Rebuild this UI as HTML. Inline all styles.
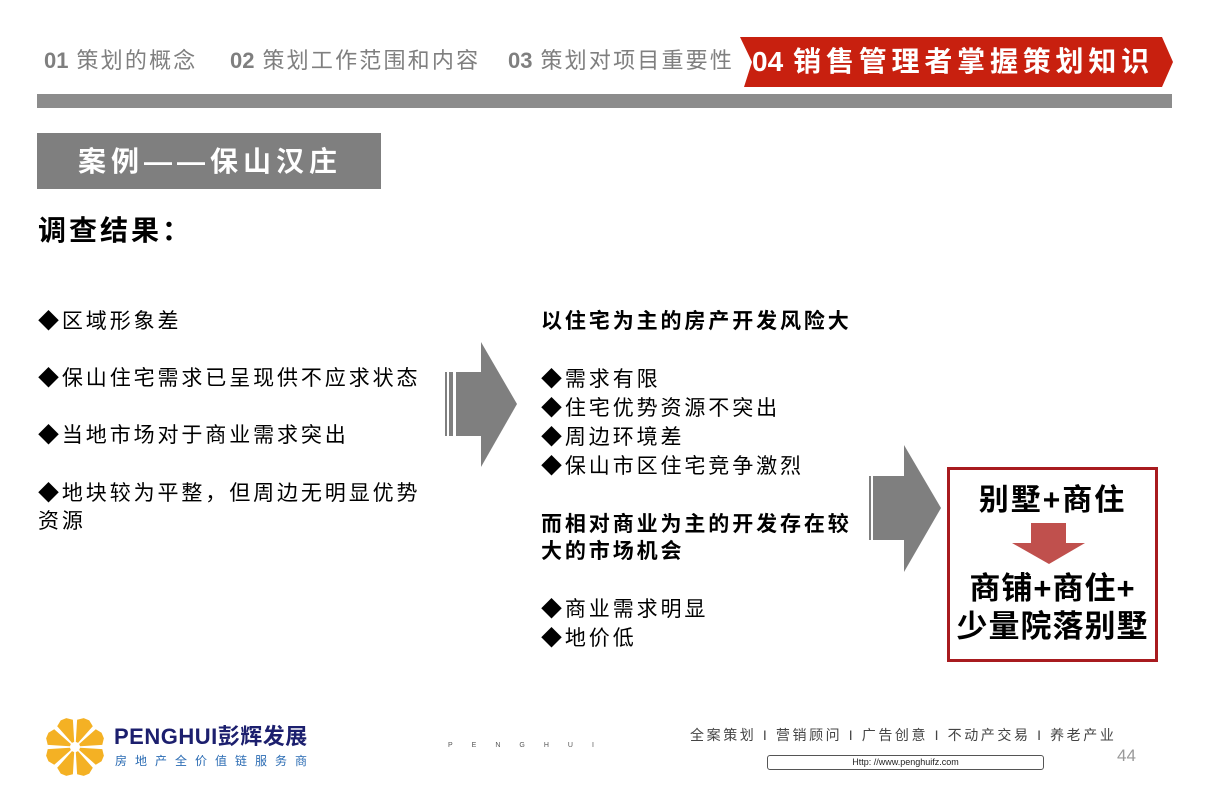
<!DOCTYPE html>
<html><head><meta charset="utf-8"><style>
*{margin:0;padding:0;box-sizing:border-box}
body{width:1209px;height:793px;background:#fff;position:relative;overflow:hidden;font-family:"Liberation Sans","Noto Sans CJK SC",sans-serif;color:#000}
.a{position:absolute;white-space:nowrap}
.nav{font-size:22px;color:#7f7f7f;top:46px;line-height:30px;letter-spacing:2.2px}
.nav b{font-family:"Liberation Sans Narrow","Liberation Sans",sans-serif;font-weight:bold;margin-right:8px;letter-spacing:0}
.t{font-size:21px;line-height:28px;letter-spacing:2.9px}
.bd{font-weight:bold}
</style></head><body>
<div class="a nav" style="left:44px"><b>01</b>策划的概念</div>
<div class="a nav" style="left:230px"><b>02</b>策划工作范围和内容</div>
<div class="a nav" style="left:508px"><b>03</b>策划对项目重要性</div>
<svg class="a" style="left:738px;top:37px" width="436" height="51"><polygon points="2,0 424,0 435,25 424,50 6,50 14,25" fill="#c8200f"/></svg>
<div class="a" style="left:752px;top:43px;font-size:28px;font-weight:bold;color:#fff;line-height:38px;letter-spacing:4.8px"><span style="margin-right:10px;letter-spacing:0">04</span>销售管理者掌握策划知识</div>
<div class="a" style="left:37px;top:94px;width:1135px;height:14px;background:#8c8c8c"></div>
<div class="a" style="left:37px;top:133px;width:344px;height:56px;background:#7f7f7f"></div>
<div class="a" style="left:78px;top:144px;font-size:28px;font-weight:bold;color:#fff;line-height:36px;letter-spacing:5px">案例——保山汉庄</div>
<div class="a bd" style="left:38px;top:213px;font-size:28px;line-height:36px;letter-spacing:3px">调查结果：</div>
<div class="a t" style="left:38px;top:308px">◆区域形象差</div>
<div class="a t" style="left:38px;top:365px">◆保山住宅需求已呈现供不应求状态</div>
<div class="a t" style="left:38px;top:422px">◆当地市场对于商业需求突出</div>
<div class="a t" style="left:38px;top:480px">◆地块较为平整，但周边无明显优势<br>资源</div>
<svg class="a" style="left:440px;top:340px" width="80" height="130"><rect x="5" y="32" width="2" height="64" fill="#7f7f7f"/><rect x="9" y="32" width="4" height="64" fill="#7f7f7f"/><rect x="16" y="32" width="26" height="64" fill="#7f7f7f"/><polygon points="41,2 77,64 41,127" fill="#7f7f7f"/></svg>
<div class="a t bd" style="left:541px;top:308px">以住宅为主的房产开发风险大</div>
<div class="a t" style="left:541px;top:365px;line-height:29px">◆需求有限<br>◆住宅优势资源不突出<br>◆周边环境差<br>◆保山市区住宅竞争激烈</div>
<div class="a t bd" style="left:541px;top:511px;line-height:27px">而相对商业为主的开发存在较<br>大的市场机会</div>
<div class="a t" style="left:541px;top:595px;line-height:29px">◆商业需求明显<br>◆地价低</div>
<svg class="a" style="left:864px;top:443px" width="80" height="132"><rect x="5" y="33" width="2" height="64" fill="#7f7f7f"/><rect x="9" y="33" width="4" height="64" fill="#7f7f7f"/><rect x="12" y="33" width="28" height="64" fill="#7f7f7f"/><polygon points="40,2 77,65 40,129" fill="#7f7f7f"/></svg>
<div class="a" style="left:947px;top:467px;width:211px;height:195px;border:3px solid #a81b1f"></div>
<div class="a bd" style="left:947px;top:482px;width:211px;text-align:center;font-size:30px;line-height:38px;letter-spacing:2px">别墅+商住</div>
<svg class="a" style="left:1012px;top:523px" width="74" height="42"><rect x="19" y="0" width="35" height="21" fill="#c0504d"/><polygon points="0,20 73,20 37,41" fill="#c0504d"/></svg>
<div class="a bd" style="left:947px;top:570px;width:211px;text-align:center;font-size:31px;line-height:38px;letter-spacing:1px">商铺+商住+<br>少量院落别墅</div>
<svg class="a" style="left:44px;top:716px" width="62" height="62" viewBox="-31 -31 62 62">
<defs><polygon id="p" points="5,-1.2 26,-8.5 30,-3 30,3 26,8.5 5,1.2" fill="#f4b124"/></defs>
<use href="#p" transform="rotate(22.5)"/><use href="#p" transform="rotate(67.5)"/><use href="#p" transform="rotate(112.5)"/><use href="#p" transform="rotate(157.5)"/><use href="#p" transform="rotate(202.5)"/><use href="#p" transform="rotate(247.5)"/><use href="#p" transform="rotate(292.5)"/><use href="#p" transform="rotate(337.5)"/>
</svg>
<div class="a" style="left:114px;top:724px;font-size:22px;font-weight:bold;color:#1c1f6e;line-height:26px;letter-spacing:0.5px">PENGHUI彭辉发展</div>
<div class="a" style="left:115px;top:753px;font-size:12px;color:#2a6bb3;letter-spacing:8px;line-height:16px">房地产全价值链服务商</div>
<div class="a" style="left:448px;top:742px;font-size:7px;color:#555;letter-spacing:19px">PENGHUI</div>
<div class="a" style="left:690px;top:726px;font-size:14px;color:#444;letter-spacing:2.6px;line-height:18px">全案策划 Ι 营销顾问 Ι 广告创意 Ι 不动产交易 Ι 养老产业</div>
<div class="a" style="left:767px;top:755px;width:277px;height:15px;border:1.5px solid #555;border-radius:3px;font-size:9px;text-align:center;line-height:12px;color:#222">Http: //www.penghuifz.com</div>
<div class="a" style="left:1117px;top:746px;font-size:17px;color:#999">44</div>
</body></html>
